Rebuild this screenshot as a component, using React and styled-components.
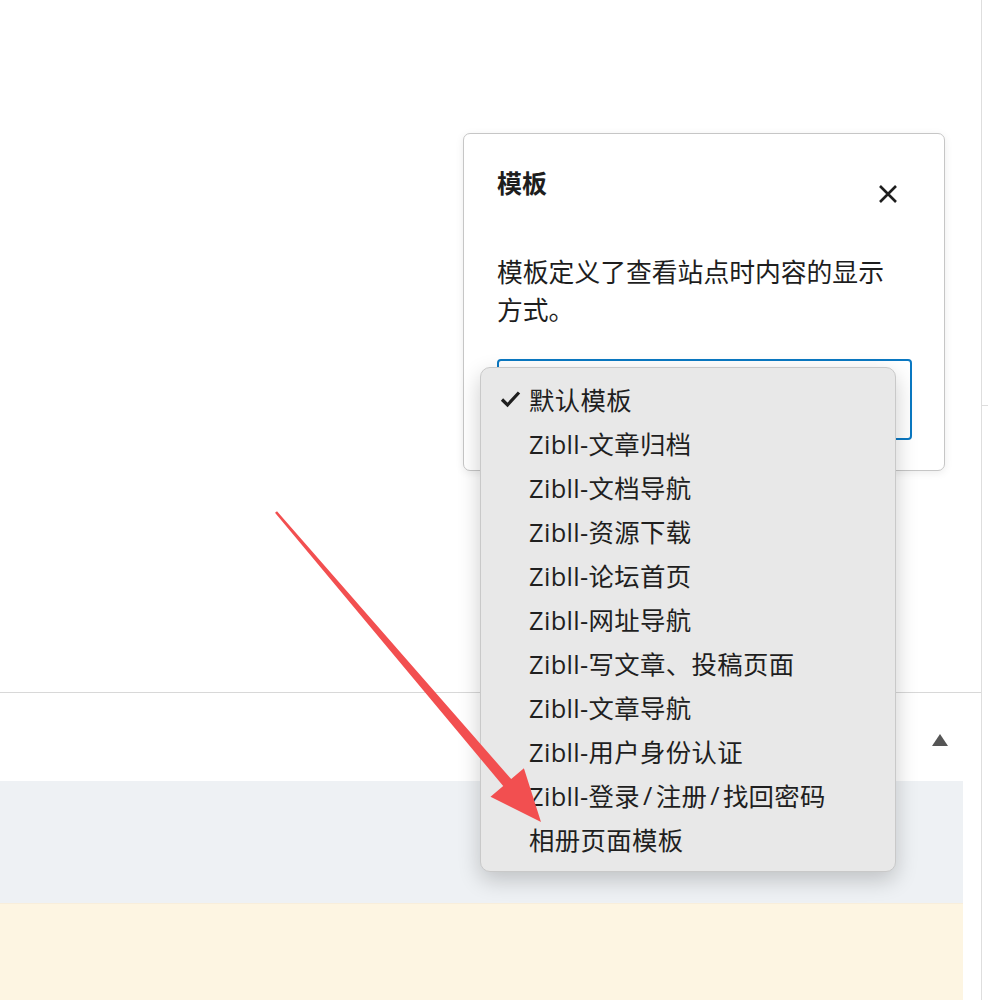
import React from 'react';
import styled, { createGlobalStyle } from 'styled-components';

const GlobalStyle = createGlobalStyle`
  html, body {
    margin: 0;
    padding: 0;
    background: #fff;
  }
  body {
    font-family: "Noto Sans", "Noto Sans CJK SC", sans-serif;
    color: #1e1e1e;
  }
`;

const templates = [
  '默认模板',
  'Zibll-文章归档',
  'Zibll-文档导航',
  'Zibll-资源下载',
  'Zibll-论坛首页',
  'Zibll-网址导航',
  'Zibll-写文章、投稿页面',
  'Zibll-文章导航',
  'Zibll-用户身份认证',
  'Zibll-登录/注册/找回密码',
  '相册页面模板',
];

const Page = styled.div`
  position: relative;
  display: flex;
  width: 988px;
  height: 1000px;
  overflow: hidden;
`;

const Main = styled.div`
  width: 981px;
  display: flex;
  flex-direction: column;
  border-right: 1px solid #dedede;
`;

const Side = styled.div`
  flex: 1;
  display: flex;
  flex-direction: column;
`;

const SideTop = styled.div`
  height: 405px;
  border-bottom: 1px solid #dedede;
`;

const Canvas = styled.div`
  flex: none;
  height: 692px;
  border-bottom: 1px solid #d8d8d8;
`;

const PanelHeader = styled.div`
  flex: none;
  height: 88px;
  box-sizing: border-box;
  padding: 6px 33px 0 0;
  display: flex;
  align-items: center;
  justify-content: flex-end;
`;

const Caret = styled.span`
  width: 0;
  height: 0;
  border-left: 8px solid transparent;
  border-right: 8px solid transparent;
  border-bottom: 12px solid #555;
`;

const Band = styled.div`
  flex: none;
  height: ${p => p.$h}px;
  margin-right: 18px;
  background: ${p => p.$bg};
  border-top: 1px solid ${p => p.$line || 'transparent'};
`;

const Popover = styled.div`
  position: absolute;
  left: 463px;
  top: 133px;
  width: 482px;
  height: 338px;
  box-sizing: border-box;
  padding: 30px 32px 0 33px;
  background: #fff;
  border: 1px solid #c6c6c6;
  border-radius: 7px;
  box-shadow: 0 2px 8px rgba(0, 0, 0, 0.08);
`;

const Header = styled.div`
  display: flex;
  align-items: flex-start;
  justify-content: space-between;
`;

const Title = styled.h2`
  margin: 0;
  font-size: 25px;
  line-height: 36px;
  font-weight: 700;
  font-family: "Noto Sans CJK SC", sans-serif;
`;

const Close = styled.button`
  margin-top: 12px;
  margin-right: 6px;
  width: 36px;
  height: 36px;
  padding: 0;
  border: none;
  background: none;
  display: flex;
  align-items: center;
  justify-content: center;
  color: #1e1e1e;
`;

const Description = styled.p`
  margin: 40px 0 0;
  width: 400px;
  font-size: 25.8px;
  line-height: 38px;
  font-family: "Noto Sans CJK SC", sans-serif;
`;

const SelectBox = styled.div`
  margin-top: 31px;
  height: 81px;
  box-sizing: border-box;
  border: 2px solid #0a78c2;
  border-radius: 4px;
`;

const Menu = styled.ul`
  position: absolute;
  left: 480px;
  top: 367px;
  width: 416px;
  height: 505px;
  box-sizing: border-box;
  margin: 0;
  padding: 9px 0 10px;
  list-style: none;
  background: #e8e8e8;
  border: 1px solid #c9c9c9;
  border-radius: 10px;
  box-shadow: 0 8px 22px rgba(0, 0, 0, 0.2);
`;

const Item = styled.li`
  display: flex;
  align-items: center;
  height: 44px;
  padding-left: 19px;
  font-size: 25.4px;
  letter-spacing: 0.35px;
  font-family: "Open Sans", "Noto Sans CJK SC", sans-serif;
  color: #1f1f1f;
  white-space: nowrap;
`;

const Check = styled.span`
  width: 29px;
  flex: none;
  display: flex;
  align-items: center;
  visibility: ${p => (p.$on ? 'visible' : 'hidden')};
`;

const Slash = styled.span`
  padding: 0 3px;
`;

const Annotation = styled.svg`
  position: absolute;
  left: 0;
  top: 0;
  pointer-events: none;
`;

// keep the "/" a bit airier, as the system font in the reference draws it
const label = t =>
  t.split('/').flatMap((part, i) => (i === 0 ? [part] : [<Slash key={i}>/</Slash>, part]));

export default function App() {
  return (
    <>
      <GlobalStyle />
      <Page>
        <Main>
          <Canvas />
          <PanelHeader>
            <Caret />
          </PanelHeader>
          <Band $h={121} $bg="#eef1f4" />
          <Band $h={98} $bg="#fdf5e2" $line="#f8eedb" />
        </Main>
        <Side>
          <SideTop />
        </Side>

        <Popover>
          <Header>
            <Title>模板</Title>
            <Close aria-label="关闭">
              <svg width="22" height="22" viewBox="0 0 22 22">
                <path d="M3 3 L19 19 M19 3 L3 19" stroke="currentColor" strokeWidth="2.6" fill="none" />
              </svg>
            </Close>
          </Header>
          <Description>模板定义了查看站点时内容的显示方式。</Description>
          <SelectBox />
        </Popover>

        <Menu>
          {templates.map((t, i) => (
            <Item key={t}>
              <Check $on={i === 0}>
                <svg width="21" height="18" viewBox="0 0 21 18">
                  <path d="M2 9.5 L7.5 15 L19 2.5" stroke="#1e1e1e" strokeWidth="3.2" fill="none" />
                </svg>
              </Check>
              {label(t)}
            </Item>
          ))}
        </Menu>

        <Annotation width="988" height="1000" viewBox="0 0 988 1000">
          <polygon
            points="275,512.8 503.2,786 490.5,796.8 541,822 523.9,768.2 511.2,779.1 277,511.2"
            fill="#f24f50"
          />
        </Annotation>
      </Page>
    </>
  );
}
